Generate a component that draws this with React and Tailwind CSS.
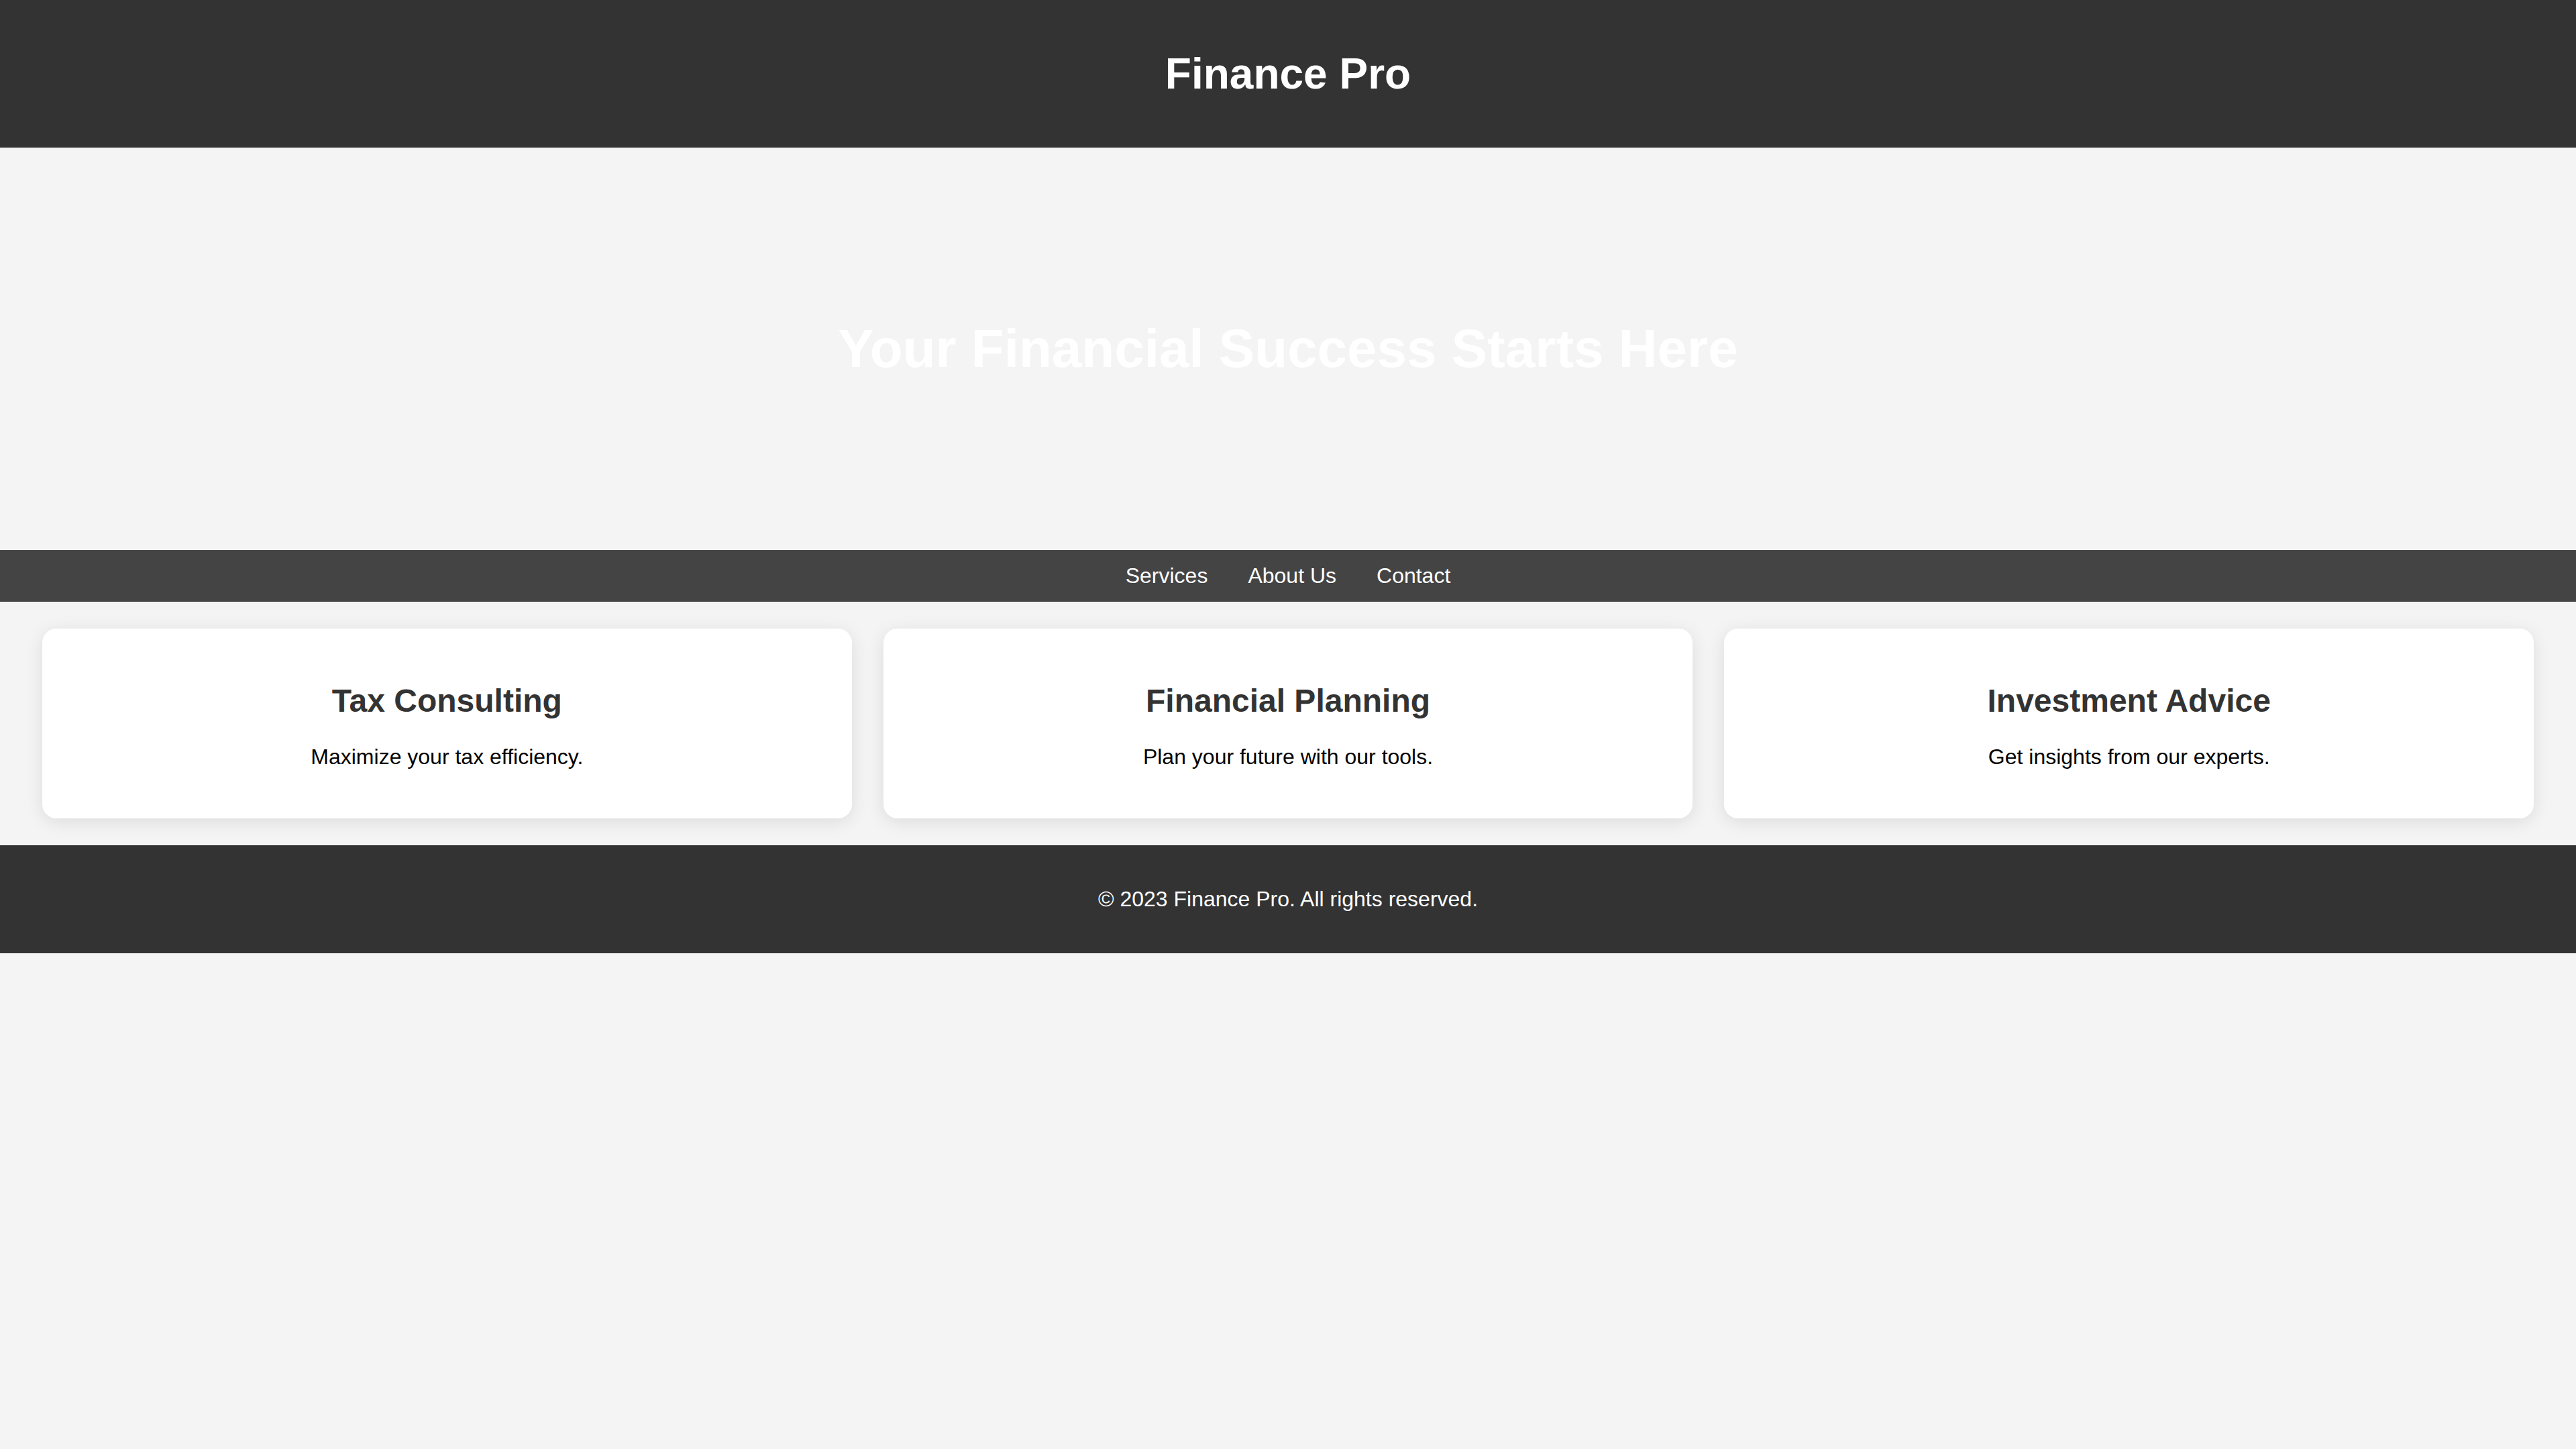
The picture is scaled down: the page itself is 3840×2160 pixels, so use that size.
export default function App() {
  const cards = [
    { title: "Tax Consulting", text: "Maximize your tax efficiency." },
    { title: "Financial Planning", text: "Plan your future with our tools." },
    { title: "Investment Advice", text: "Get insights from our experts." },
  ];
  return (
    <div className="min-h-screen bg-[#f4f4f4] font-['Liberation_Sans',Arial,sans-serif]">
      <header className="h-[220px] bg-[#333333] flex items-center justify-center">
        <h1 className="text-white text-[64px] leading-[74px] font-bold">Finance Pro</h1>
      </header>
      <section className="h-[600px] flex items-center justify-center">
        <h2 className="text-white text-[80px] leading-[92px] font-bold">Your Financial Success Starts Here</h2>
      </section>
      <nav className="h-[77px] bg-[#444444] flex items-center justify-center gap-[60px]">
        <a className="text-white text-[32px] leading-[37px]">Services</a>
        <a className="text-white text-[32px] leading-[37px]">About Us</a>
        <a className="text-white text-[32px] leading-[37px]">Contact</a>
      </nav>
      <main className="flex gap-[47px] px-[63px] py-[40px]">
        {cards.map((c) => (
          <div
            key={c.title}
            className="flex-1 h-[283px] bg-white rounded-[21px] shadow-[0_5px_27px_rgba(0,0,0,0.1)] flex flex-col items-center pt-[80px]"
          >
            <h3 className="text-[#333333] text-[48px] leading-[55px] font-bold">{c.title}</h3>
            <p className="text-black text-[32px] leading-[37px] mt-[38px]">{c.text}</p>
          </div>
        ))}
      </main>
      <footer className="h-[161px] bg-[#333333] flex items-center justify-center">
        <p className="text-white text-[32px] leading-[37px]">© 2023 Finance Pro. All rights reserved.</p>
      </footer>
    </div>
  );
}
